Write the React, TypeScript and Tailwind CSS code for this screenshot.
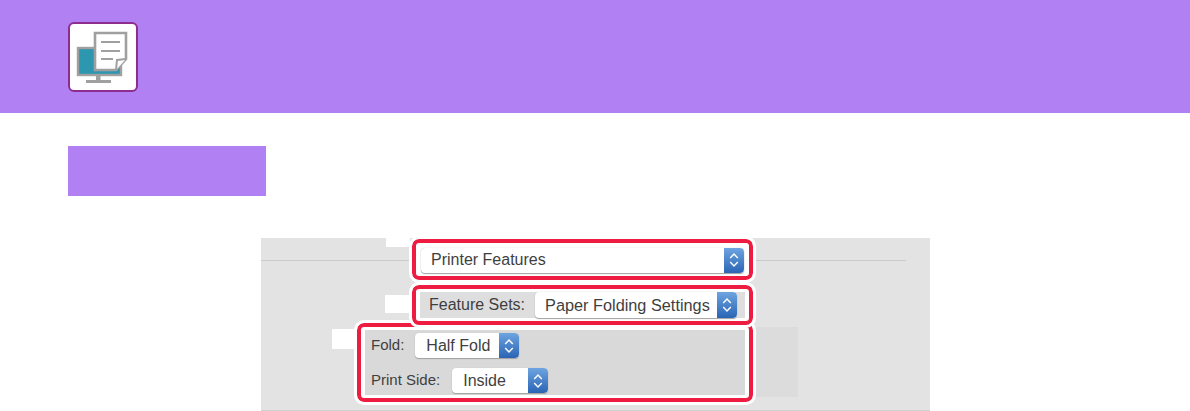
const fontClass = "font-['Liberation_Sans',Arial,sans-serif]"

function PrinterIcon() {
  return (
    <svg width="66" height="66" viewBox="0 0 66 66">
      <rect x="8" y="24" width="43" height="27" fill="#2e97b0" stroke="#a0a0a0" strokeWidth="2.4" />
      <rect x="26" y="51" width="4.5" height="5" fill="#a0a0a0" />
      <rect x="16" y="56" width="25" height="3" fill="#a0a0a0" />
      <path d="M25 9 H56 V35 L46 46 H25 Z" fill="#fff" stroke="#a0a0a0" strokeWidth="2.6" />
      <path d="M46 46 L47 36 L56 35" fill="#fff" stroke="#a0a0a0" strokeWidth="2" />
      <path d="M31 18 H50 M31 27 H50 M31 35 H43" stroke="#a0a0a0" strokeWidth="2.2" />
    </svg>
  )
}

function Stepper() {
  return (
    <div className="flex h-full w-5 shrink-0 items-center justify-center rounded-r-[4px] bg-gradient-to-b from-[#6ea4e0] to-[#2a64b4]">
      <svg width="10" height="18" viewBox="0 0 10 18" fill="none" stroke="#fff" strokeWidth="1.4">
        <path d="M1.2 7 L5 3 L8.8 7" />
        <path d="M1.2 11 L5 15 L8.8 11" />
      </svg>
    </div>
  )
}

function MacSelect({ label, className }: { label: string; className: string }) {
  return (
    <div
      className={`flex items-center justify-between overflow-hidden rounded-[4px] bg-white leading-none text-[#3f3f3f] shadow-[0_1px_1px_#a0a0a0,0_0_1px_#b4b4b4] ${className}`}
    >
      <span className="whitespace-nowrap">{label}</span>
      <Stepper />
    </div>
  )
}

const highlightClass =
  "relative box-border border-[4px] border-[#ee1c41] rounded-[7px] bg-white outline outline-[3px] outline-white"

export default function App() {
  return (
    <div className={`h-[411px] w-[1190px] overflow-hidden bg-white ${fontClass}`}>
      <header className="flex h-[113px] items-center bg-[#b180f3] pl-[68px]">
        <div className="flex h-[70px] w-[70px] items-center justify-center rounded-[6px] border-2 border-[#8f2c8f] bg-white">
          <PrinterIcon />
        </div>
      </header>

      <div className="mt-[33px] ml-[68px] h-[50px] w-[198px] bg-[#b180f3]" />

      <figure className="relative mt-[42px] ml-[261px] h-[173px] w-[669px] bg-[#e3e3e3] pt-px">
        <div className="absolute top-[22px] left-0 h-px w-[645px] bg-[#cbcbcb]" />
        <div className="absolute top-0 left-[125px] h-[9px] w-[24px] bg-white" />
        <div className="absolute top-[57px] left-[124px] h-[18px] w-[24px] bg-white" />
        <div className="absolute top-[91px] left-[71px] h-[20px] w-[24px] bg-white" />
        <div className="absolute top-[89px] left-[400px] h-[70px] w-[137px] bg-[#dcdcdc]" />
        <div className="absolute bottom-0 left-0 h-px w-full bg-[#d0d0d0]" />

        <div className={`${highlightClass} ml-[151px] flex h-[41px] w-[341px] items-center pt-[1px] pl-[5px]`}>
          <MacSelect label="Printer Features" className="h-[25px] w-[323px] pl-[10px] text-[16px]" />
        </div>

        <div className={`${highlightClass} z-10 mt-[5px] ml-[151px] flex h-[40px] w-[341px] items-center pl-[4px]`}>
          <div className="flex h-[26px] w-[325px] items-center gap-[10px] bg-[#dedede] pl-[9px] text-[16px] text-[#3f3f3f]">
            <span className="whitespace-nowrap">Feature Sets:</span>
            <MacSelect label="Paper Folding Settings" className="h-[26px] w-[202px] pl-[10px] text-[16.3px]" />
          </div>
        </div>

        <div className={`${highlightClass} -mt-[2px] ml-[96px] h-[79px] w-[396px] pt-[3px] pr-[4px] pb-[3px] pl-[4px]`}>
          <div className="flex h-[65px] flex-col gap-[10px] bg-[#d9d9d9] pt-[3px] pl-[6px] text-[15px] text-[#3f3f3f]">
            <div className="flex h-[25px] items-center gap-[11px]">
              <span>Fold:</span>
              <MacSelect label="Half Fold" className="h-[25px] w-[104px] pl-[11px] text-[16px]" />
            </div>
            <div className="flex h-[25px] items-center gap-[12px]">
              <span className="whitespace-nowrap">Print Side:</span>
              <MacSelect label="Inside" className="h-[25px] w-[96px] pl-[11px] text-[16px]" />
            </div>
          </div>
        </div>
      </figure>
    </div>
  )
}
